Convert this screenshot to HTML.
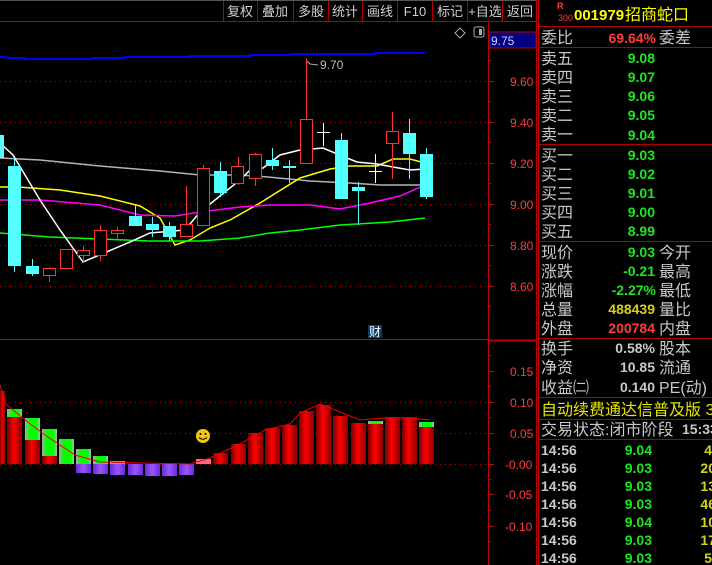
<!DOCTYPE html>
<html><head><meta charset="utf-8"><style>
html,body{margin:0;padding:0;background:#000;width:712px;height:565px;overflow:hidden}
svg{display:block}
text{font-family:"Liberation Sans","Noto Sans CJK SC",sans-serif}
.tb{fill:#cfcfcf;font-size:13px}
.lb{fill:#c8c8c8;font-size:16px}
.ax{fill:#ff3c3c;font-size:12px}
</style></head><body>
<svg width="712" height="565" viewBox="0 0 712 565" xmlns="http://www.w3.org/2000/svg">
<defs>
<linearGradient id="rg" x1="0" x2="1" y1="0" y2="0"><stop offset="0" stop-color="#700"/><stop offset="0.45" stop-color="#ff0000"/><stop offset="1" stop-color="#800"/></linearGradient>
<linearGradient id="bg" x1="0" x2="1" y1="0" y2="0"><stop offset="0" stop-color="#6a2ad8"/><stop offset="0.5" stop-color="#9b55ff"/><stop offset="1" stop-color="#6a2ad8"/></linearGradient>
<linearGradient id="gg" x1="0" x2="1" y1="0" y2="0"><stop offset="0" stop-color="#aaa"/><stop offset="0.3" stop-color="#00ff00"/><stop offset="0.8" stop-color="#00ff00"/><stop offset="1" stop-color="#bbb"/></linearGradient>
</defs>
<rect width="712" height="565" fill="#000"/>
<line x1="0" y1="0.5" x2="536" y2="0.5" stroke="#555"/>
<line x1="0" y1="21.5" x2="537" y2="21.5" stroke="#b00000"/>
<g stroke="#b00000">
<line x1="223.5" y1="1" x2="223.5" y2="21"/><line x1="257.5" y1="1" x2="257.5" y2="21"/><line x1="293.5" y1="1" x2="293.5" y2="21"/><line x1="328.5" y1="1" x2="328.5" y2="21"/><line x1="362.5" y1="1" x2="362.5" y2="21"/><line x1="397.5" y1="1" x2="397.5" y2="21"/><line x1="432.5" y1="1" x2="432.5" y2="21"/><line x1="467.5" y1="1" x2="467.5" y2="21"/><line x1="502.5" y1="1" x2="502.5" y2="21"/>
</g>
<g class="tb" text-anchor="middle">
<text x="240" y="16">复权</text><text x="275" y="16">叠加</text><text x="311" y="16">多股</text><text x="345" y="16">统计</text><text x="380" y="16">画线</text><text x="415" y="16">F10</text><text x="450" y="16">标记</text><text x="485" y="16">+自选</text><text x="520" y="16">返回</text>
</g>
<line x1="488.5" y1="22" x2="488.5" y2="565" stroke="#c00000"/>
<line x1="536.5" y1="0" x2="536.5" y2="565" stroke="#c00000"/>
<line x1="538.5" y1="0" x2="538.5" y2="565" stroke="#c00000"/>
<rect x="489" y="32" width="47" height="16" fill="#000080" stroke="#c00000"/>
<text x="491" y="45" fill="#d0d0ff" font-size="12">9.75</text>
<path d="M460 28 L465 33 L460 38 L455 33 Z" fill="none" stroke="#aaa"/>
<rect x="474" y="27" width="10" height="10" rx="2" fill="none" stroke="#aaa"/><rect x="479" y="29" width="3" height="6" fill="#aaa"/>
<g class="ax">
<text x="510" y="86">9.60</text><text x="510" y="127">9.40</text><text x="510" y="168">9.20</text><text x="510" y="209">9.00</text><text x="510" y="250">8.80</text><text x="510" y="291">8.60</text>
<text x="510" y="376">0.15</text><text x="510" y="407">0.10</text><text x="510" y="438">0.05</text><text x="505" y="469">-0.00</text><text x="505" y="499">-0.05</text><text x="505" y="531">-0.10</text>
</g>
<g stroke="#c00000">
<path d="M488 60.5h3M488 81.5h6M488 101.5h3M488 122.5h6M488 142.5h3M488 163.5h6M488 183.5h3M488 204.5h6M488 224.5h3M488 245.5h6M488 265.5h3M488 286.5h6M488 306.5h3"/>
<path d="M488 355.5h3M488 371.5h6M488 386.5h3M488 402.5h6M488 417.5h3M488 433.5h6M488 448.5h3M488 464.5h6M488 479.5h3M488 494.5h6M488 510.5h3M488 526.5h6M488 541.5h3"/>
</g>
<g stroke="#d00000" stroke-dasharray="1 4">
<line x1="0" y1="81.5" x2="486" y2="81.5"/><line x1="0" y1="122.5" x2="486" y2="122.5"/><line x1="0" y1="163.5" x2="486" y2="163.5"/><line x1="0" y1="204.5" x2="486" y2="204.5"/><line x1="0" y1="245.5" x2="486" y2="245.5"/><line x1="0" y1="286.5" x2="486" y2="286.5"/>
<line x1="0" y1="402.5" x2="486" y2="402.5"/><line x1="0" y1="433.5" x2="486" y2="433.5"/><line x1="0" y1="464.5" x2="486" y2="464.5"/>
</g>
<line x1="0" y1="339.5" x2="488" y2="339.5" stroke="#c00000"/>
<line x1="488" y1="340.5" x2="537" y2="340.5" stroke="#c00000" stroke-width="2"/>
<polyline fill="none" stroke="#0000ff" stroke-width="2" points="0,57 6,57 8,58 25,58 25,59 92,59 92,58 125,58 125,57 190,57 190,56 250,56 250,55 290,55 290,54 375,54 375,53 425,53"/>
<polyline fill="none" stroke="#b4b4b4" stroke-width="1.5" points="0,158 40,160 100,166 160,171 200,175 240,175 268,177 310,181 350,183 380,185 425,185"/>
<polyline fill="none" stroke="#ffff00" stroke-width="1.5" points="0,187 18,187 60,190 100,196 140,206 160,218 175,245 190,240 210,228 230,220 260,203 300,178 330,169 350,166 377,166 393,159 410,159 425,163"/>
<polyline fill="none" stroke="#ff00ff" stroke-width="1.5" points="0,200 40,200 100,205 140,215 175,216 200,212 240,207 270,205 310,205 340,209 370,203 400,196 425,185"/>
<polyline fill="none" stroke="#00ff00" stroke-width="1.5" points="0,233 50,237 100,239 150,241 200,241 240,238 270,233 300,230 340,225 390,222 425,218"/>
<polyline fill="none" stroke="#fff" stroke-width="1.5" points="0,143 13,155 40,200 60,230 83,262 130,242 150,233 185,230 200,212 215,200 240,180 250,170 263,168 280,155 300,150 323,148 347,158 357,162 377,164 393,167 410,170 425,169"/>
<g stroke="#54ffff" fill="#54ffff">
<line x1="14.5" y1="158" x2="14.5" y2="272"/><line x1="32.5" y1="259" x2="32.5" y2="276"/><line x1="135.5" y1="204" x2="135.5" y2="226"/><line x1="152.5" y1="217" x2="152.5" y2="237"/><line x1="169.5" y1="222" x2="169.5" y2="241"/><line x1="220.5" y1="162" x2="220.5" y2="197"/><line x1="272.5" y1="148" x2="272.5" y2="170"/><line x1="289.5" y1="160" x2="289.5" y2="183"/><line x1="341.5" y1="133" x2="341.5" y2="199"/><line x1="358.5" y1="182" x2="358.5" y2="225"/><line x1="409.5" y1="119" x2="409.5" y2="179"/><line x1="426.5" y1="148" x2="426.5" y2="199"/>
<rect x="0" y="135" width="4" height="23" stroke="none"/>
<rect x="8" y="166" width="13" height="100" stroke="none"/>
<rect x="26" y="266" width="13" height="8" stroke="none"/>
<rect x="129" y="216" width="13" height="10" stroke="none"/>
<rect x="146" y="224" width="13" height="6" stroke="none"/>
<rect x="163" y="226" width="13" height="11" stroke="none"/>
<rect x="214" y="171" width="13" height="22" stroke="none"/>
<rect x="266" y="160" width="13" height="6" stroke="none"/>
<rect x="283" y="166" width="13" height="2" stroke="none"/>
<rect x="335" y="140" width="13" height="59" stroke="none"/>
<rect x="352" y="187" width="13" height="4" stroke="none"/>
<rect x="403" y="133" width="13" height="21" stroke="none"/>
<rect x="420" y="154" width="13" height="43" stroke="none"/>
</g>
<g stroke="#ff3232" fill="none">
<path d="M49.5 267v15M83.5 246v16M100.5 225v36M117.5 227v13M186.5 186v51M203.5 165v61M238.5 157v28M255.5 153v33M306.5 58v105M392.5 112v67"/>
<rect x="43.5" y="268.5" width="12" height="7" fill="#000"/>
<rect x="60.5" y="249.5" width="12" height="19" fill="#000"/>
<rect x="77.5" y="250.5" width="12" height="5" fill="#000"/>
<rect x="94.5" y="230.5" width="12" height="25" fill="#000"/>
<rect x="111.5" y="230.5" width="12" height="3" fill="#000"/>
<rect x="180.5" y="224.5" width="12" height="12" fill="#000"/>
<rect x="197.5" y="168.5" width="12" height="57" fill="#000"/>
<rect x="231.5" y="166.5" width="12" height="17" fill="#000"/>
<rect x="249.5" y="154.5" width="12" height="24" fill="#000"/>
<rect x="300.5" y="119.5" width="12" height="44" fill="#000"/>
<rect x="386.5" y="131.5" width="12" height="12" fill="#000"/>
</g>
<g stroke="#fff"><path d="M323.5 123v23M317 132.5h13M375.5 154v29M369 171.5h13"/></g>
<path d="M307 61 L310 64 L318 65" fill="none" stroke="#aaa"/>
<text x="320" y="69" fill="#bbb" font-size="12">9.70</text>
<rect x="368" y="325" width="14" height="13" fill="#0a3c6e"/>
<text x="369" y="336" fill="#fff" font-size="12">财</text>
<g fill="url(#rg)">
<rect x="0" y="391" width="5" height="73"/><rect x="7" y="417" width="15" height="47"/><rect x="25" y="440" width="15" height="24"/><rect x="42" y="456" width="15" height="8"/>
<rect x="196" y="459" width="15" height="5" fill="#ff6a7a"/><rect x="213" y="453" width="15" height="11"/><rect x="231" y="444" width="15" height="20"/><rect x="248" y="433" width="15" height="31"/><rect x="265" y="428" width="15" height="36"/><rect x="282" y="425" width="15" height="39"/><rect x="299" y="411" width="15" height="53"/><rect x="316" y="405" width="15" height="59"/><rect x="333" y="416" width="15" height="48"/><rect x="351" y="423" width="15" height="41"/><rect x="368" y="424" width="15" height="40"/><rect x="385" y="417" width="15" height="47"/><rect x="402" y="417" width="15" height="47"/><rect x="419" y="427" width="15" height="37"/>
</g>
<g fill="url(#gg)">
<rect x="7" y="409" width="15" height="8"/><rect x="25" y="418" width="15" height="22"/><rect x="42" y="429" width="15" height="27"/><rect x="59" y="439" width="15" height="25"/><rect x="76" y="449" width="15" height="15"/><rect x="93" y="456" width="15" height="8"/><rect x="110" y="461" width="15" height="3"/><rect x="368" y="421" width="15" height="3"/><rect x="419" y="422" width="15" height="5"/>
</g>
<g fill="url(#bg)">
<rect x="76" y="464" width="15" height="9"/><rect x="93" y="464" width="15" height="10"/><rect x="110" y="464" width="15" height="11"/><rect x="128" y="464" width="15" height="11"/><rect x="145" y="464" width="15" height="12"/><rect x="162" y="464" width="15" height="12"/><rect x="179" y="464" width="15" height="11"/>
</g>
<polyline fill="none" stroke="#e00" stroke-width="1" points="0,385 6,404 25,420 45,435 75,455 100,462 190,464 210,458 240,444 265,430 290,424 300,413 320,404 340,412 360,420 385,418 410,418 430,420"/>
<circle cx="203" cy="436" r="7" fill="#f0c814"/><circle cx="200.5" cy="434" r="1" fill="#000"/><circle cx="205.5" cy="434" r="1" fill="#000"/><path d="M199 437.5 Q203 441 207 437.5" stroke="#000" fill="none"/>
<g stroke="#b00000">
<line x1="539" y1="26.5" x2="712" y2="26.5"/><line x1="539" y1="47.5" x2="712" y2="47.5"/><line x1="539" y1="144.5" x2="712" y2="144.5"/><line x1="539" y1="241.5" x2="712" y2="241.5"/><line x1="539" y1="338.5" x2="712" y2="338.5"/><line x1="539" y1="397.5" x2="712" y2="397.5"/><line x1="539" y1="419.5" x2="712" y2="419.5"/><line x1="539" y1="439.5" x2="712" y2="439.5"/>
</g>
<text x="557" y="9" fill="#ff3c3c" font-size="9" font-weight="bold">R</text>
<text x="558" y="21" fill="#ff3c3c" font-size="9">300</text>
<text x="574" y="20" fill="#ffff00" font-size="15" font-weight="bold">001979</text>
<text x="625" y="20" fill="#ffff00" font-size="16">招商蛇口</text>
<g class="lb">
<text x="541" y="43">委比</text><text x="659" y="43">委差</text>
<text x="541" y="64">卖五</text><text x="541" y="83">卖四</text><text x="541" y="102">卖三</text><text x="541" y="121">卖二</text><text x="541" y="140">卖一</text>
<text x="541" y="161">买一</text><text x="541" y="180">买二</text><text x="541" y="199">买三</text><text x="541" y="218">买四</text><text x="541" y="237">买五</text>
<text x="541" y="258">现价</text><text x="541" y="277">涨跌</text><text x="541" y="296">涨幅</text><text x="541" y="315">总量</text><text x="541" y="334">外盘</text>
<text x="659" y="258">今开</text><text x="659" y="277">最高</text><text x="659" y="296">最低</text><text x="659" y="315">量比</text><text x="659" y="334">内盘</text>
<text x="541" y="354">换手</text><text x="541" y="373">净资</text><text x="541" y="393">收益㈡</text>
<text x="659" y="354">股本</text><text x="659" y="373">流通</text><text x="659" y="393">PE(动)</text>
<text x="541" y="435">交易状态:闭市阶段</text>
</g>
<text x="541" y="415" fill="#e6e600" font-size="16">自动续费通达信普及版  3</text>
<g text-anchor="end" font-weight="bold" font-size="14">
<text x="656" y="43" fill="#ff3c3c">69.64%</text>
<text x="655" y="63" fill="#1ee61e">9.08</text><text x="655" y="82" fill="#1ee61e">9.07</text><text x="655" y="101" fill="#1ee61e">9.06</text><text x="655" y="120" fill="#1ee61e">9.05</text><text x="655" y="140" fill="#1ee61e">9.04</text>
<text x="655" y="160" fill="#1ee61e">9.03</text><text x="655" y="179" fill="#1ee61e">9.02</text><text x="655" y="198" fill="#1ee61e">9.01</text><text x="655" y="217" fill="#1ee61e">9.00</text><text x="655" y="236" fill="#1ee61e">8.99</text>
<text x="655" y="257" fill="#1ee61e">9.03</text><text x="655" y="276" fill="#1ee61e">-0.21</text><text x="656" y="295" fill="#1ee61e">-2.27%</text><text x="655" y="314" fill="#d2d21e">488439</text><text x="655" y="333" fill="#ff3c3c">200784</text>
<text x="655" y="353" fill="#c8c8c8">0.58%</text><text x="655" y="372" fill="#c8c8c8">10.85</text><text x="655" y="392" fill="#c8c8c8">0.140</text>
</g>
<text x="682" y="434" fill="#c8c8c8" font-size="14" font-weight="bold">15:33</text>
<g font-size="14" font-weight="bold">
<g fill="#c8c8c8"><text x="541" y="455">14:56</text><text x="541" y="473">14:56</text><text x="541" y="491">14:56</text><text x="541" y="509">14:56</text><text x="541" y="527">14:56</text><text x="541" y="545">14:56</text><text x="541" y="563">14:56</text></g>
<g fill="#1ee61e" text-anchor="end"><text x="652" y="455">9.04</text><text x="652" y="473">9.03</text><text x="652" y="491">9.03</text><text x="652" y="509">9.03</text><text x="652" y="527">9.04</text><text x="652" y="545">9.03</text><text x="652" y="563">9.03</text></g>
<g fill="#d2d21e" text-anchor="end"><text x="712" y="455">4</text><text x="716" y="473">20</text><text x="716" y="491">13</text><text x="716" y="509">46</text><text x="716" y="527">10</text><text x="716" y="545">17</text><text x="712" y="563">5</text></g>
</g>
</svg>
</body></html>
